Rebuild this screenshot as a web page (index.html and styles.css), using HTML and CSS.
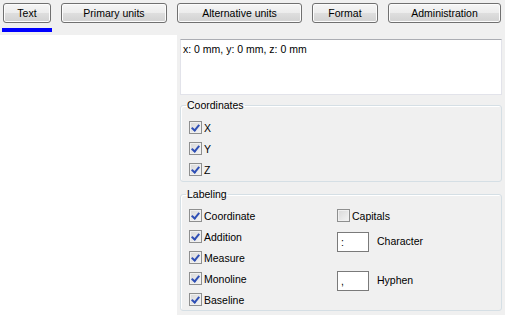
FILE: index.html
```html
<!DOCTYPE html>
<html lang="en">
<head>
  <meta charset="UTF-8" />
  <title>Label settings</title>
  <link rel="stylesheet" href="styles.css">
</head>
<body>

  <div class="tabs">
    <button class="tab tab-text">Text</button>
    <button class="tab tab-primary">Primary units</button>
    <button class="tab tab-alt">Alternative units</button>
    <button class="tab tab-format">Format</button>
    <button class="tab tab-admin">Administration</button>
  </div>
  <div class="indicator"></div>

  <div class="main">
    <div class="side"></div>

    <div class="content">
      <div class="preview">x: 0 mm, y: 0 mm, z: 0 mm</div>

      <fieldset class="group group-coords">
        <legend>Coordinates</legend>
        <label class="check"><span class="box on"></span>X</label>
        <label class="check"><span class="box on"></span>Y</label>
        <label class="check"><span class="box on"></span>Z</label>
      </fieldset>

      <fieldset class="group group-labels">
        <legend>Labeling</legend>
        <div class="cols">
          <div class="col-left">
            <label class="check"><span class="box on"></span>Coordinate</label>
            <label class="check"><span class="box on"></span>Addition</label>
            <label class="check"><span class="box on"></span>Measure</label>
            <label class="check"><span class="box on"></span>Monoline</label>
            <label class="check"><span class="box on"></span>Baseline</label>
          </div>
          <div class="col-right">
            <label class="check"><span class="box"></span>Capitals</label>
            <div class="field field-char">
              <span class="input">:</span>
              <span class="field-label">Character</span>
            </div>
            <div class="field field-hyphen">
              <span class="input">,</span>
              <span class="field-label">Hyphen</span>
            </div>
          </div>
        </div>
      </fieldset>
    </div>
  </div>

</body>
</html>
```

FILE: styles.css
```css
body {
  margin: 0;
  width: 505px;
  height: 315px;
  overflow: hidden;
  background: #f0f0f0;
  font-family: "Liberation Sans", Arial, sans-serif;
  font-size: 10.5px;
  color: #000;
}

/* top button row */
.tabs {
  display: grid;
  grid-template-columns: 48px 106px 125px 66px 113px;
  column-gap: 10px;
  padding: 3px 0 0 3px;
}
.tab {
  height: 20px;
  padding: 0;
  font-family: inherit;
  font-size: 10.5px;
  color: #000;
  border: 1px solid #707070;
  border-radius: 3px;
  background: linear-gradient(#f6f6f6 0%, #ececec 50%, #dedede 51%, #d2d2d2 100%);
  box-shadow: inset 0 0 0 1px #fcfcfc;
}
.indicator {
  width: 50px;
  height: 4px;
  margin: 5px 0 0 2px;
  background: #0000ff;
}

.main {
  display: flex;
  margin-top: 3px;
  height: 280px;
}
.side {
  width: 177px;
  background: #fff;
}
.content {
  width: 322px;
  margin-left: 3px;
  padding-top: 4px;
}

.preview {
  height: 51px;
  padding: 3px 2px 0;
  background: #fff;
  border: 1px solid #e2e3ea;
  border-top-color: #abadb3;
}

/* group boxes */
.group {
  margin: 4px 0 0;
  padding: 0 0 0 8px;
  border: 1px solid #d5dfe5;
  border-radius: 3px;
  box-shadow: inset 1px 1px 0 #fff;
}
.group legend {
  margin-left: -3px;
  padding: 0 1px;
  line-height: 12px;
}
.group-coords {
  padding-top: 6px;
  padding-bottom: 1px;
}
.group-labels {
  margin-top: 6px;
  padding-top: 5px;
  padding-bottom: 0;
}

.check {
  display: flex;
  align-items: center;
  height: 21px;
}
.box {
  position: relative;
  width: 11px;
  height: 11px;
  margin-right: 2px;
  border: 1px solid #8e8f8f;
  background: linear-gradient(135deg, #d8d8d8, #f4f4f4);
  box-shadow: inset 0 0 0 1px #f0f0f0;
}
.box.on::after {
  content: "";
  position: absolute;
  left: 3px;
  top: 1px;
  width: 3px;
  height: 6px;
  border-right: 2px solid #2f4fb5;
  border-bottom: 2px solid #2f4fb5;
  transform: rotate(40deg);
}

.cols {
  display: flex;
}
.col-left {
  width: 148px;
}
.field {
  display: flex;
  align-items: center;
}
.field-char {
  margin-top: 6px;
}
.field-hyphen {
  margin-top: 19px;
}
.input {
  width: 27px;
  height: 18px;
  padding-left: 3px;
  line-height: 18px;
  background: #fff;
  border: 1px solid #7a7a7a;
}
.field-label {
  margin: 0 0 3px 8px;
}
```
